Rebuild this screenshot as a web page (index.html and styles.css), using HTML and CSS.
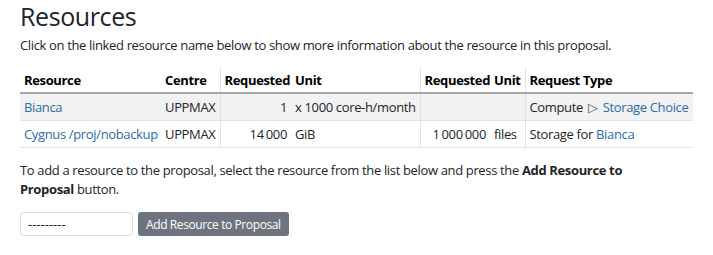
FILE: index.html
```
<!DOCTYPE html>
<html lang="en">
<head>
    <meta charset="UTF-8">
    <meta name="viewport" content="width=device-width, initial-scale=1.0">
    <title>Resources</title>
    <link rel="stylesheet" href="styles.css">
</head>
<body>
    <div class="container">
        <h3>Resources</h3>
        <p class="intro">Click on the linked resource name below to show more information about the resource in this proposal.</p>

        <table class="resources">
            <colgroup>
                <col class="w-res">
                <col class="w-centre">
                <col class="w-req">
                <col class="w-unit">
                <col class="w-req2">
                <col class="w-unit2">
                <col>
            </colgroup>
            <thead>
                <tr>
                    <th>Resource</th>
                    <th>Centre</th>
                    <th class="num sep">Requested</th>
                    <th>Unit</th>
                    <th class="num sep">Requested</th>
                    <th>Unit</th>
                    <th class="sep">Request Type</th>
                </tr>
            </thead>
            <tbody>
                <tr class="odd">
                    <td><a href="#">Bianca</a></td>
                    <td>UPPMAX</td>
                    <td class="num sep">1</td>
                    <td>x 1000 core-h/month</td>
                    <td class="num sep"></td>
                    <td></td>
                    <td class="sep">Compute <span class="arrow">&#9655;</span> <a href="#">Storage Choice</a></td>
                </tr>
                <tr>
                    <td><a href="#">Cygnus /proj/nobackup</a></td>
                    <td>UPPMAX</td>
                    <td class="num sep">14<span class="thin"></span>000</td>
                    <td>GiB</td>
                    <td class="num sep">1<span class="thin"></span>000<span class="thin"></span>000</td>
                    <td>files</td>
                    <td class="sep">Storage for <a href="#">Bianca</a></td>
                </tr>
            </tbody>
        </table>

        <p class="add-help">To add a resource to the proposal, select the resource from the list below and press the <b>Add Resource to Proposal</b> button.</p>

        <form class="add-form" onsubmit="return false">
            <select class="res-select">
                <option>---------</option>
            </select>
            <button class="btn">Add Resource to Proposal</button>
        </form>
    </div>
</body>
</html>
```

FILE: styles.css
```
body {
    font-family: "Open Sans", "Liberation Sans", sans-serif;
    font-size: 13px;
    letter-spacing: -0.35px;
    color: #212529;
    margin: 0;
    padding: 0;
    background: #fff;
}

.container {
    padding: 1px 20px 0 20px;
}

h3 {
    font-size: 25px;
    font-weight: 500;
    line-height: 1.2;
    letter-spacing: -0.4px;
    margin: 0 0 5px 0;
}

p {
    margin: 0;
    line-height: 19px;
}

a {
    color: #2b6ca8;
    text-decoration: none;
}

.intro {
    margin-bottom: 12px;
}

table.resources {
    width: 100%;
    border-collapse: collapse;
    table-layout: fixed;
}

.w-res { width: 141px; }
.w-centre { width: 59px; }
.w-req { width: 71px; }
.w-unit { width: 129px; }
.w-req2 { width: 70px; }
.w-unit2 { width: 35px; }

.resources th {
    text-align: left;
    font-weight: bold;
    color: #000;
    padding: 4px 4px 3px 4px;
    border-bottom: 2px solid #a6a6a6;
    white-space: nowrap;
}

.resources td {
    padding: 3px 4px 4px 4px;
    height: 19px;
    border-bottom: 1px solid #dee2e6;
    white-space: nowrap;
}

.resources tr.odd td {
    background: #f2f2f2;
}

.resources .sep {
    border-left: 1px solid #dee2e6;
}

.resources .num {
    text-align: right;
}

.thin {
    display: inline-block;
    width: 2px;
}

.arrow {
    color: #555b61;
    font-size: 13px;
    margin: 0 2px;
}

.add-help {
    margin-top: 13px;
    max-width: 620px;
}

.add-form {
    display: flex;
    gap: 5px;
    margin-top: 13px;
}

.res-select {
    appearance: none;
    -webkit-appearance: none;
    width: 113px;
    height: 24px;
    border: 1px solid #dcdde2;
    border-radius: 4px;
    background: #fff;
    font-family: inherit;
    font-size: 13px;
    color: #212529;
    padding: 0 7px;
}

.btn {
    height: 24px;
    border: none;
    border-radius: 3px;
    background-color: #6c757d;
    color: #fff;
    font-family: inherit;
    font-size: 12px;
    letter-spacing: -0.4px;
    padding: 0 8px;
    cursor: pointer;
}
```
